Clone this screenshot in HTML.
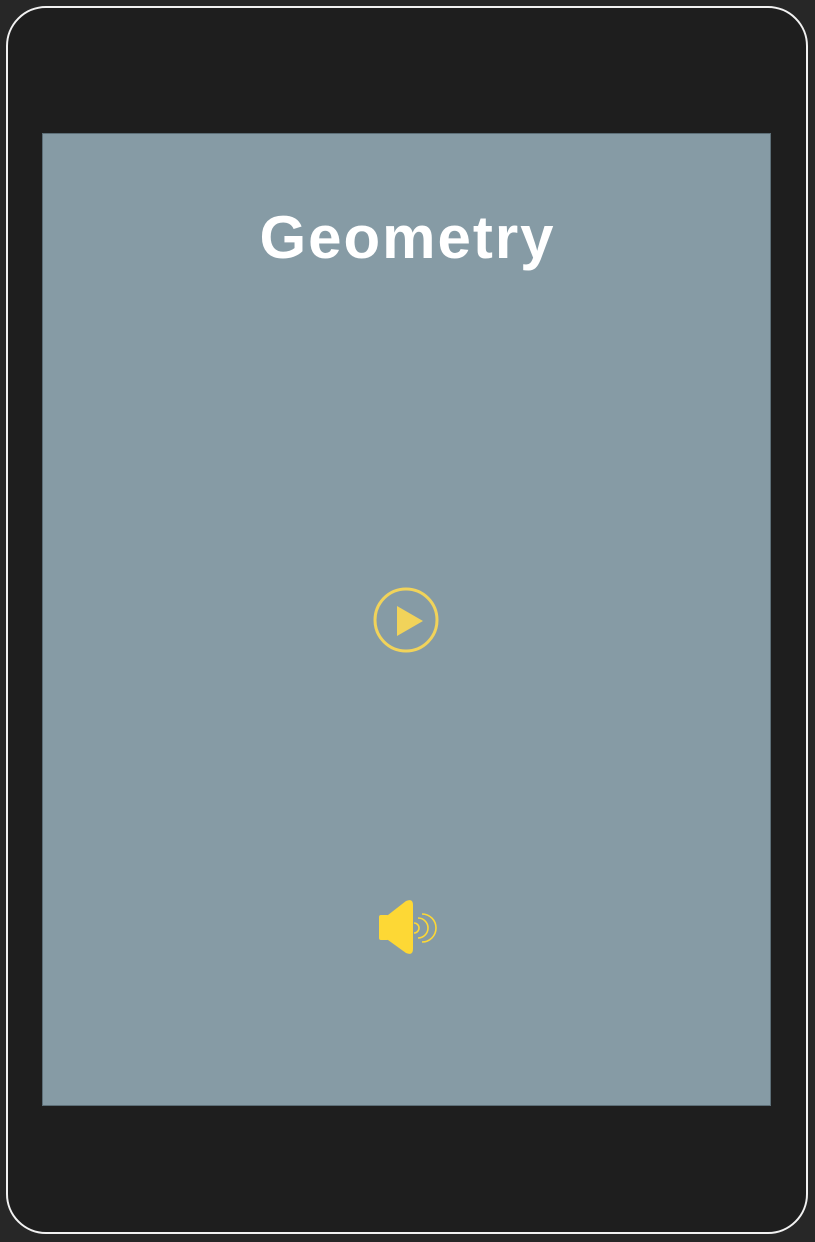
<!DOCTYPE html>
<html><head><style>
html,body{margin:0;padding:0;background:#272727;width:815px;height:1242px;overflow:hidden}
.dev{position:absolute;left:6px;top:6px;width:798px;height:1224px;border:2px solid #f2f2f2;border-radius:40px;background:#1e1e1e}
.scr{position:absolute;left:42px;top:133px;width:727px;height:971px;background:#869ba5;border:1px solid #5d6f78}
h1{position:absolute;left:0;width:815px;top:203px;margin:0;text-align:center;font:bold 60px "Liberation Sans",sans-serif;color:#fff;letter-spacing:2px}
svg{position:absolute;left:0;top:0}
</style></head><body>
<div class="dev"></div>
<div class="scr"></div>
<h1>Geometry</h1>
<svg width="815" height="1242">
<circle cx="406" cy="620" r="31" fill="none" stroke="#f1d35a" stroke-width="3"/>
<polygon points="397,606 397,636 423,621" fill="#f1d35a"/>
<rect x="379" y="915" width="10" height="25" rx="2" fill="#fdd835"/>
<path d="M388 915 L406 901 Q413 898 413 905 L413 949 Q413 956 406 953 L388 940 Z" fill="#fdd835"/>
<g fill="none" stroke="#fdd835" stroke-width="1.6">
<path d="M414 923 A5 5 0 0 1 414 933"/>
<path d="M418 918 A10 10 0 0 1 418 938"/>
<path d="M422 914 A14 14 0 0 1 422 942"/>
</g>
</svg>
</body></html>
